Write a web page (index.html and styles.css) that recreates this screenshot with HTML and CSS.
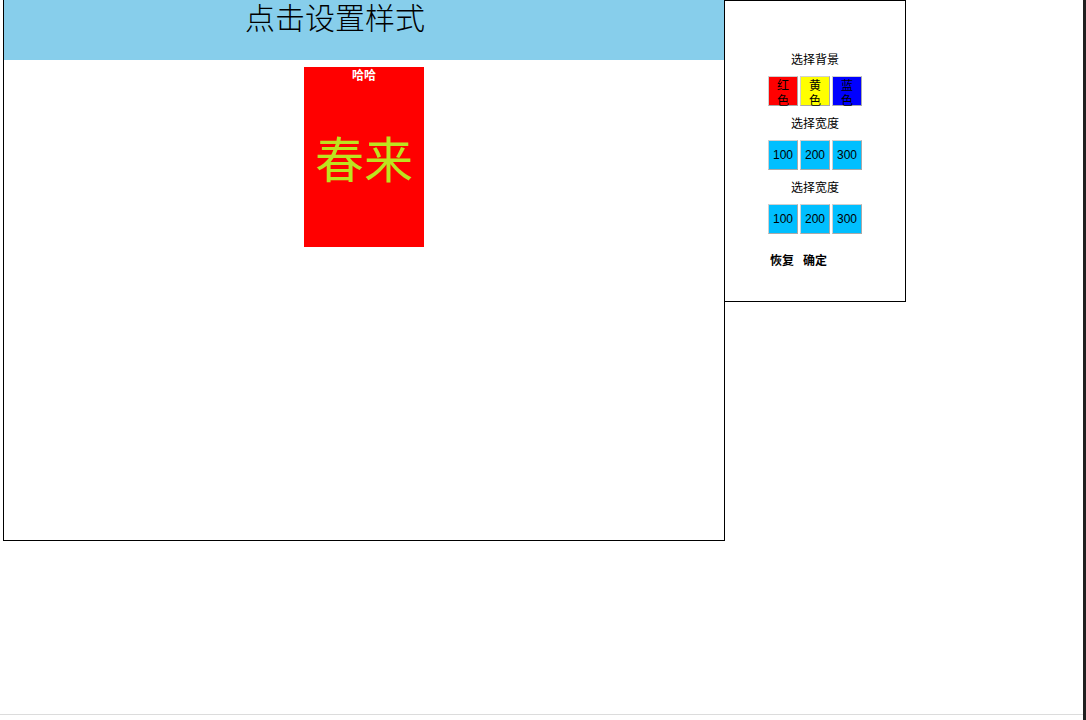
FILE: index.html
```html
<!DOCTYPE html>
<html lang="zh">
<head>
<meta charset="utf-8">
<title>点击设置样式</title>
<link rel="stylesheet" href="styles.css">
</head>
<body>
<div class="frame">
  <div class="page">
    <div class="layout">
      <div class="stage">
        <div class="header">点击设置样式</div>
        <div class="card">
          <div class="card-title">哈哈</div>
          <div class="card-text">春来</div>
        </div>
      </div>
      <div class="panel">
        <div class="label">选择背景</div>
        <div class="btn-row">
          <button class="btn btn-color red"><span>红色</span></button>
          <button class="btn btn-color yellow"><span>黄色</span></button>
          <button class="btn btn-color blue"><span>蓝色</span></button>
        </div>
        <div class="label">选择宽度</div>
        <div class="btn-row">
          <button class="btn btn-num">100</button>
          <button class="btn btn-num">200</button>
          <button class="btn btn-num">300</button>
        </div>
        <div class="label">选择宽度</div>
        <div class="btn-row">
          <button class="btn btn-num">100</button>
          <button class="btn btn-num">200</button>
          <button class="btn btn-num">300</button>
        </div>
        <div class="actions">
          <span class="action">恢复</span>
          <span class="action">确定</span>
        </div>
      </div>
    </div>
  </div>
  <div class="bottom-bar"></div>
  <div class="edge"></div>
</div>
</body>
</html>
```
FILE: styles.css
```css
html, body {
  margin: 0;
  padding: 0;
  height: 720px;
  overflow: hidden;
  background: #fff;
  font-family: "Liberation Sans", "Noto Sans CJK SC", sans-serif;
  font-size: 12px;
  color: #000;
}

.frame {
  display: grid;
  grid-template-columns: 1083px 3px;
  grid-template-rows: 714px 6px;
  height: 720px;
}

.page {
  grid-column: 1;
  grid-row: 1;
  overflow: hidden;
}

.bottom-bar {
  grid-column: 1;
  grid-row: 2;
  border-top: 1px solid #dcdcdc;
  background: #fff;
}

.edge {
  grid-column: 2;
  grid-row: 1 / span 2;
  background: #202020;
}

.layout {
  display: flex;
  align-items: flex-start;
}

.stage {
  width: 720px;
  height: 540px;
  border: 1px solid #000;
  border-top: 0;
  margin-left: 3px;
}

.header {
  height: 60px;
  background: #87ceeb;
  font-family: "Liberation Sans", "Noto Sans CJK SC", sans-serif;
  font-size: 30px;
  line-height: 37px;
  text-align: center;
  padding-right: 58px;
  box-sizing: border-box;
  font-weight: 300;
}

.card {
  width: 120px;
  height: 180px;
  margin: 7px auto 0;
  background: #ff0000;
  display: flex;
  flex-direction: column;
  align-items: center;
}

.card-title {
  color: #fff;
  font-weight: bold;
  font-family: "Noto Sans CJK SC", sans-serif;
  font-size: 12px;
  line-height: 16px;
}

.card-text {
  margin-top: 44px;
  color: #bde31f;
  font-family: "Noto Sans CJK SC", sans-serif;
  font-size: 49px;
  line-height: 60px;
}

.panel {
  width: 180px;
  height: 250px;
  border: 1px solid #000;
  margin-left: -1px;
  padding-top: 50px;
  display: flex;
  flex-direction: column;
  align-items: center;
  gap: 9px;
}

.label {
  font-family: "Noto Sans CJK SC", sans-serif;
  font-size: 12px;
  line-height: 16px;
}

.btn-row {
  display: flex;
  gap: 2px;
}

.btn {
  width: 30px;
  height: 30px;
  margin: 0;
  border: 1px solid #a9a9a9;
  border-top-color: #d0d0d0;
  border-left-color: #d0d0d0;
  box-sizing: border-box;
  font-size: 12px;
  color: #000;
  font-family: "Liberation Sans", "Noto Sans CJK SC", sans-serif;
}

.btn-color {
  display: flex;
  flex-direction: column;
  align-items: center;
  justify-content: flex-start;
  padding: 0 6px;
  line-height: 15px;
  font-family: "Noto Sans CJK SC", sans-serif;
  overflow: visible;
}

.btn-color span {
  display: block;
  width: 16px;
  text-align: center;
}

.red { background: #ff0000; }
.yellow { background: #ffff00; }
.blue { background: #0000ff; }

.btn-num {
  background: #00bfff;
  padding: 0;
  line-height: 28px;
  text-align: center;
}

.actions {
  align-self: flex-start;
  margin-left: 45px;
  margin-top: 9px;
  display: flex;
  gap: 9px;
}

.action {
  font-family: "Noto Sans CJK SC", sans-serif;
  font-weight: bold;
  font-size: 12px;
  line-height: 16px;
}
```
